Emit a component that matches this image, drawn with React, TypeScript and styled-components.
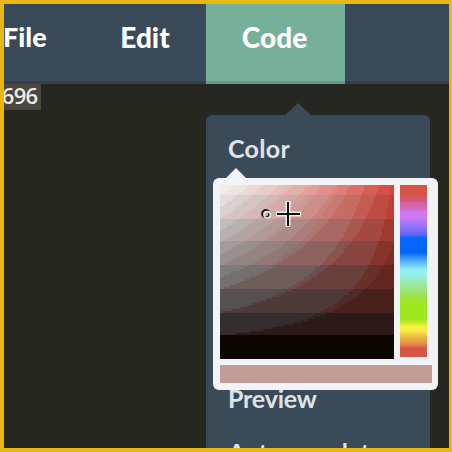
import React from "react";
import styled, { createGlobalStyle } from "styled-components";

const slate = "#3a4a59";
const paper = "#f1f3f6";

const GlobalStyle = createGlobalStyle`
  *, *::before, *::after { box-sizing: border-box; }
  body { margin: 0; background: #e8b712; overflow: hidden; }
`;

const Frame = styled.main`
  width: 452px;
  height: 452px;
  padding: 4px 3px 4px 4px;
  background: #e8b712;
  font-family: Lato, "Open Sans", sans-serif;
`;

const Editor = styled.div`
  position: relative;
  height: 444px;
  overflow: hidden;
  background: #262721;
`;

const MenuBar = styled.nav`
  display: flex;
  height: 80px;
  background: ${slate};
  box-shadow: inset 0 -3px 0 #34424f;
`;

const MenuItem = styled.div<{ $width: number; $active?: boolean; $align?: string; $size?: number }>`
  width: ${(p) => p.$width}px;
  flex: none;
  display: flex;
  justify-content: ${(p) => p.$align ?? "center"};
  color: #fff;
  font-size: ${(p) => p.$size ?? 27}px;
  font-weight: 900;
  line-height: 66px;
  white-space: nowrap;
  background: ${(p) => (p.$active ? "#76b09a" : "transparent")};
  box-shadow: ${(p) => (p.$active ? "inset 0 -3px 0 #68988a" : "none")};
`;

const MenuLabel = styled.span<{ $shift?: number }>`
  margin-left: ${(p) => p.$shift ?? 0}px;
`;

const CodeLine = styled.div`
  display: flex;
`;

const CodeValue = styled.span`
  width: 36.5px;
  height: 25.5px;
  padding-right: 3px;
  display: flex;
  justify-content: flex-end;
  background: #4a4741;
  color: #efece4;
  font: 600 22px/22px "Open Sans", sans-serif;
  letter-spacing: -0.7px;
`;

const Arrow = styled.svg<{ $left: number; $top: number }>`
  position: absolute;
  left: ${(p) => p.$left}px;
  top: ${(p) => p.$top}px;
  display: block;
`;

const Dropdown = styled.section`
  position: absolute;
  left: 202px;
  top: 111px;
  width: 224px;
  height: 400px;
  padding: 16px 22px;
  border-radius: 6px;
  background: ${slate};
`;

const Option = styled.div<{ $gap?: number; $tracking?: number }>`
  height: 36px;
  margin-bottom: ${(p) => p.$gap ?? 16}px;
  color: #e0e3e5;
  font-size: 25px;
  font-weight: 700;
  line-height: 35px;
  letter-spacing: ${(p) => p.$tracking ?? 0}px;
  white-space: nowrap;
`;

const Picker = styled.div`
  position: absolute;
  left: 208.5px;
  top: 174px;
  width: 225.5px;
  height: 212px;
  padding: 6.5px 6.5px 7px 7px;
  border-radius: 6px;
  background: ${paper};
`;

const PickerRow = styled.div`
  display: flex;
  gap: 6.5px;
`;

const Field = styled.div`
  position: relative;
  width: 174px;
  height: 174px;
`;

const HueBar = styled.div`
  width: 26.5px;
  height: 172px;
  background: linear-gradient(
    #d65545 0, #d65545 10px, #d55773 13px, #d55773 16px, #d361a5 18px, #d268b8 23px,
    #cf78ef 27px, #cf78f2 33px, #b278f7 36px, #8b72f7 43px, #5b65fa 50px,
    #0566fb 53px, #0566fb 68px, #3799f8 73px, #72caf7 80px, #91eff2 85px,
    #91eff0 90px, #9beabb 95px, #9de78c 103px, #9be342 112px, #a0e61d 119px,
    #a0e61d 134px, #c8ea28 138px, #f8ed42 141px, #f8ed42 146px, #edb849 152px,
    #e79448 158px, #dc7647 161px, #d65545 163px, #d65545 172px
  );
`;

const Swatch = styled.div`
  height: 18px;
  margin-top: 6.5px;
  background: #c29c97;
`;

const Drawing = styled.svg`
  display: block;
`;

const Marker = styled.svg`
  position: absolute;
  left: 40px;
  top: 14px;
`;

const COLS = 87;
const CELL = 2;

/* Shades are stepped: samples sharing the same coarse RGB bucket take their mean colour. */
function buildField() {
  const buckets = new Map<string, { s: number; v: number; n: number; d: string }>();
  for (let y = 0; y < COLS; y++) {
    let start = 0;
    let last = "";
    const flush = (end: number) => {
      if (last) {
        buckets.get(last)!.d += `M${start * CELL} ${y * CELL}h${(end - start) * CELL}v${CELL}h${-(end - start) * CELL}z`;
      }
    };
    for (let x = 0; x < COLS; x++) {
      const s = (x + 0.5) / COLS;
      const v = 1 - (y + 0.5) / COLS;
      const green = v * (1 - 0.8 * s) * 240;
      const pale = s < 1.5 * (v - 0.13) && green > 96;
      const key = [
        Math.floor((v * 232) / 31.3),
        pale ? "p" + Math.floor(green / 16) : Math.floor(green / 32),
        Math.floor((v * (1 - 0.88 * s) * 240) / 32),
      ].join();
      const b = buckets.get(key) ?? { s: 0, v: 0, n: 0, d: "" };
      b.s += s;
      b.v += v;
      b.n += 1;
      buckets.set(key, b);
      if (key !== last) {
        flush(x);
        start = x;
        last = key;
      }
    }
    flush(COLS);
  }
  return [...buckets.values()].map((b) => {
    const s = Math.pow(b.s / b.n, 1.2);
    const v = b.v / b.n;
    const ch = (white: number, pure: number) => Math.round((white + (pure - white) * s) * v);
    return { d: b.d, fill: v < 0.13 ? "#0d0703" : `rgb(${ch(246, 217)},${ch(244, 70)},${ch(242, 58)})` };
  });
}

const fieldShapes = buildField();

export default function App() {
  return (
    <Frame>
      <GlobalStyle />
      <Editor>
        <MenuBar>
          <MenuItem $width={80} $align="flex-start">
            <MenuLabel $shift={-1}>File</MenuLabel>
          </MenuItem>
          <MenuItem $width={122} $size={28}>
            <MenuLabel>Edit</MenuLabel>
          </MenuItem>
          <MenuItem $width={139} $size={28} $active>
            <MenuLabel $shift={-2}>Code</MenuLabel>
          </MenuItem>
        </MenuBar>
        <CodeLine>
          <CodeValue>696</CodeValue>
        </CodeLine>
        <Dropdown>
          <Option $gap={214} $tracking={0.3}>Color</Option>
          <Option $gap={18} $tracking={-0.2}>Preview</Option>
          <Option $tracking={-0.3}>Autocomplete</Option>
        </Dropdown>
        <Arrow $left={280} $top={98} width="28" height="14">
          <path d="M0 14L14 1L28 14Z" fill={slate} />
        </Arrow>
        <Picker>
          <PickerRow>
            <Field>
              <Drawing width="174" height="174" shapeRendering="crispEdges">
                {fieldShapes.map((shape, i) => (
                  <path key={i} d={shape.d} fill={shape.fill} />
                ))}
              </Drawing>
              <Marker width="46" height="30">
                <circle cx="5.8" cy="14.7" r="3.6" fill="none" stroke="#1a1614" strokeWidth="2.2" />
                <circle cx="7.2" cy="15.8" r="3.2" fill="none" stroke="#e9e3e1" strokeWidth="1.6" />
                <path d="M28 2V28M16 15H41" stroke="#f3eeec" strokeWidth="5" />
                <path d="M28 3V27M17 15H40" stroke="#13110f" strokeWidth="2" />
              </Marker>
            </Field>
            <HueBar />
          </PickerRow>
          <Swatch />
        </Picker>
        <Arrow $left={221} $top={163} width="22" height="12">
          <path d="M0 12L11 1L22 12Z" fill={paper} />
        </Arrow>
      </Editor>
    </Frame>
  );
}
